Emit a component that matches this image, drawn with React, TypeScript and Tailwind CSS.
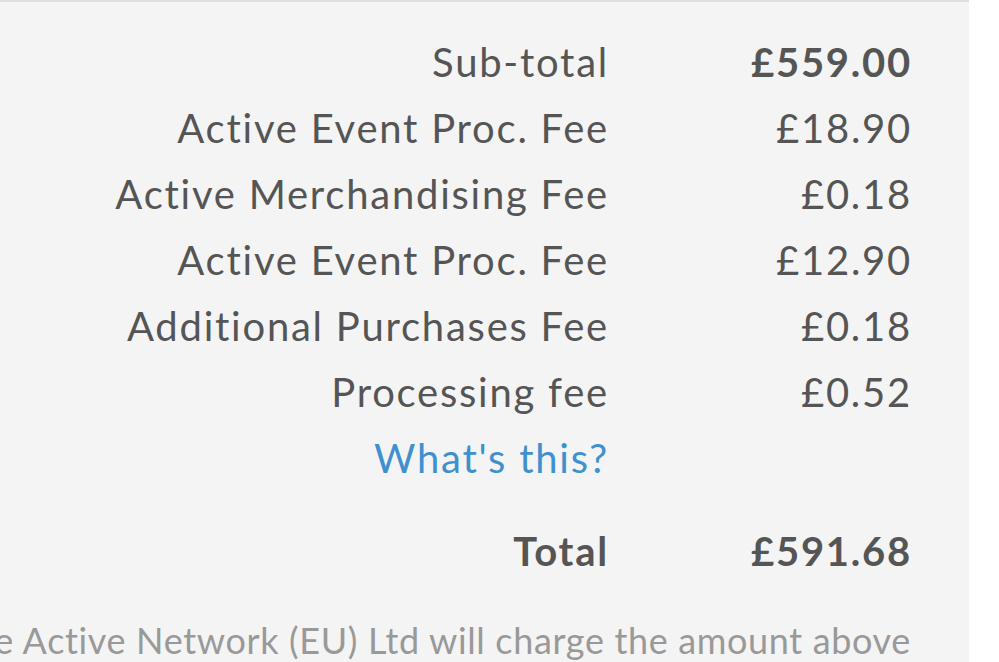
const fees = [
  { label: "Sub-total", value: "£559.00", bold: true },
  { label: "Active Event Proc. Fee", value: "£18.90" },
  { label: "Active Merchandising Fee", value: "£0.18" },
  { label: "Active Event Proc. Fee", value: "£12.90" },
  { label: "Additional Purchases Fee", value: "£0.18" },
  { label: "Processing fee", value: "£0.52" },
];

export default function App() {
  return (
    <div className="w-[999px] h-[662px] bg-white overflow-hidden font-['Lato','Noto_Sans',sans-serif]">
      <div className="w-[969px] h-[662px] bg-[#f4f4f4] border-t-2 border-[#dedede] overflow-hidden">
        <div className="pt-[27px] pr-[57px] grid grid-cols-[609px_303px] text-[40px] leading-[66px] tracking-[0.044em] text-[#555555]">
          {fees.map((f, i) => (
            <div key={i} className="contents">
              <div className="text-right whitespace-nowrap">{f.label}</div>
              <div className={"text-right whitespace-nowrap" + (f.bold ? " font-bold" : "")}>{f.value}</div>
            </div>
          ))}
          <a className="text-right whitespace-nowrap text-[#3f90cf]">What's this?</a>
          <div />
          <div className="mt-[27px] text-right font-bold">Total</div>
          <div className="mt-[27px] text-right font-bold">£591.68</div>
        </div>
        <div className="mt-[23px] w-[911px] flex justify-end">
          <p className="whitespace-nowrap text-[36px] leading-[66px] tracking-[0.018em] text-[#999999]">
            The Active Network (EU) Ltd will charge the amount above
          </p>
        </div>
      </div>
    </div>
  );
}
